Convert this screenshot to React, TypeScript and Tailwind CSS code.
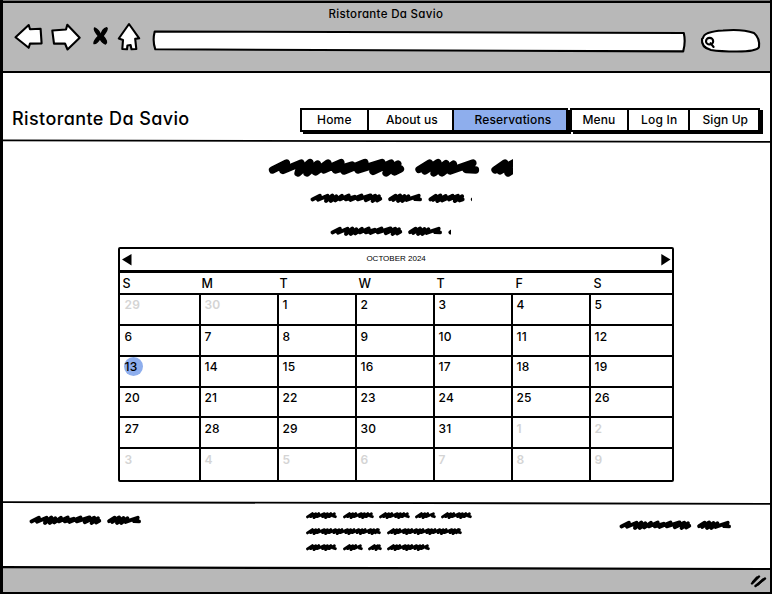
import React from "react";

const WORD_A =
  "M12.5 25 L26.5 18 L23 25.5 L41 18 L38 28 L50 17.5 L47 28 L57.5 19 L55.5 27 L68 18 L64 25 L81 17.5 L75.5 25 L92 20 L84 26 L105 17.5 L98 25 L122 17.5 L113 26.5 L131 18 L126 28 L138 19 L134.5 27 L140.5 24";
const WORD_B =
  "M159 24.5 L169.5 18 L165 26 L178 17.5 L174 28 L186 18.5 L182 28 L193.5 19 L190 26 L213 18 L206 24.5 L215.5 25";
const WORD_C =
  "M235 25 L245 18 L240 26 L254 17.5 L248 28 L264 18.5 L257 27 L277 18 L270 25 L287 18 L281 28 L295 19 L290 27 L296 25";
const WORD_D = "M315 25 L325 18 L319 27 L332 18";

/* Scribbled headline; width cuts the line off, scale sets the pen size. */
function Scribble({ width, scale, className }: { width: number; scale: number; className: string }) {
  const h = Math.round(24 * scale);
  return (
    <svg
      className={`block ${className}`}
      width={width}
      height={h}
      viewBox={`6 11 ${width / scale} ${h / scale}`}
      fill="none"
      stroke="black"
      strokeWidth={7.3}
      strokeLinecap="round"
      strokeLinejoin="round"
    >
      <path d={WORD_A} />
      <path d={WORD_B} />
      <path d={WORD_C} />
      <path d={WORD_D} />
    </svg>
  );
}

const SMALL_LINES: number[][][] = [
  [[0, 31], [37, 68], [73, 104], [109, 130], [135, 166]],
  [[0, 75], [81, 156]],
  [[0, 31], [37, 57], [62, 76], [81, 124]],
];

const STEPS = [3.4, 3, 5.6, 3, 3.4, 4.8];

function wave(a: number, b: number) {
  let d = `M${a + 1.5} 5.9`;
  let i = 0;
  for (let x = a + 4; x < b - 5; x += STEPS[i++ % 6]) {
    d += ` L${x + 2.4} 2.6 L${x + 0.6} ${i % 3 === 1 ? 6.6 : 5.7}`;
  }
  return d + ` L${b - 2.6} 2.8 L${b - 3.6} 5.2 L${b - 1.6} 5.7`;
}

function SmallLine({ words }: { words: number[][] }) {
  return (
    <svg className="block" width="168" height="8" viewBox="0 0 168 8" fill="none" stroke="black" strokeWidth="2.8" strokeLinecap="round" strokeLinejoin="round">
      {words.map(([a, b]) => (
        <path key={a} d={wave(a, b)} />
      ))}
    </svg>
  );
}

function Toolbar() {
  return (
    <header className="h-[68px] shrink-0 bg-[#b8b8b8]">
      <div className="h-[22px] pl-[325.5px] pt-[3px] text-[11.5px] font-[450] leading-[16px] tracking-[0.32px]">Ristorante Da Savio</div>
      <svg className="block" width="767" height="36" viewBox="3 25 767 36" overflow="visible" fill="white" stroke="black" strokeWidth="2.1" strokeLinejoin="round">
        <path d="M15.5 37.3 L28.7 25 L30 29.2 L40.6 28.8 L41.6 43.4 L30 43.6 L28.7 47.8 Z" />
        <path d="M52.3 30.5 L66 29.5 L67.3 24.8 L79.7 37.8 L67.5 49.5 L65 43.5 L54 43.6 Z" />
        <path d="M94.5 28 Q99 30 101 35.5 Q102 29 106.8 27.8 Q108.5 29 103 36 Q108.5 42 105.5 44 Q102 43 100 38.5 Q97 44 94 43.6 Q93.5 41 98.5 36 Q93.5 30 94.5 28 Z" fill="black" strokeWidth="1.4" />
        <path d="M129 24 L139.2 38.3 L135.2 38.9 L136.3 49 L131.5 49.3 L130.6 45 L127.4 45.5 L127 49.3 L122.3 49 L123 40 L118.8 38.5 Z" />
        <path d="M154.7 31.5 L683.8 33 Q685.8 42 683.2 51.4 L155.3 49.3 Q152.3 41 154.7 31.5 Z" />
        <path d="M703 38 Q704 31.5 723 30.5 Q742 28.7 754 33 Q760 38 759 47 Q757 51.5 737 51.5 Q720 51.5 711 50 Q701 47.5 702 39 Z" />
        <g fill="none">
          <ellipse cx="709.6" cy="41.2" rx="3.6" ry="3.3" />
          <path d="M710.5 43.2 L713.6 47" strokeLinecap="round" />
        </g>
      </svg>
    </header>
  );
}

function Slope({ left, right, weight, top, bottom, className }: { left: number; right: number; weight: number; top: string; bottom: string; className: string }) {
  return (
    <svg className={`block w-full shrink-0 ${className}`} viewBox="0 0 767 4" preserveAspectRatio="none">
      <rect width="767" height="4" fill={top} />
      <path d={`M0 ${left} L767 ${right} V4 H0 Z`} fill={bottom} />
      <path d={`M0 ${left} L767 ${right}`} stroke="black" strokeWidth={weight} />
    </svg>
  );
}

const TABS = [
  { label: "Home", box: "w-[69px] pl-[15px] border-l-2 bg-white", text: "tracking-[0.2px]" },
  { label: "About us", box: "w-[85px] pl-[17px] bg-white", text: "tracking-[0.05px]" },
  { label: "Reservations", box: "w-[114px] pl-[20.5px] bg-[#8eaeed]", text: "tracking-[0.15px]" },
];
const MORE_TABS = [
  { label: "Menu", box: "w-[59px] pl-[10.5px] border-l-2 bg-white", text: "tracking-[0.1px]" },
  { label: "Log In", box: "w-[61px] pl-[12px] bg-white", text: "tracking-[0.2px]" },
  { label: "Sign Up", box: "w-[70px] pl-[12.5px] bg-white", text: "tracking-[0.1px]" },
];

function TabGroup({ tabs }: { tabs: typeof TABS }) {
  return (
    <div className="flex h-[24px] shadow-[3px_2px_0_0_black]">
      {tabs.map((t) => (
        <a key={t.label} className={`block shrink-0 whitespace-nowrap border-y-2 border-r-2 border-black text-[12px] font-[450] leading-[20px] ${t.box}`}>
          <span className={t.text}>{t.label}</span>
        </a>
      ))}
    </div>
  );
}

const DAYS = ["S", "M", "T", "W", "T", "F", "S"];
const CELLS = [29, 30, ...Array.from({ length: 31 }, (_, i) => i + 1), 1, 2, 3, 4, 5, 6, 7, 8, 9];

function Calendar() {
  return (
    <section className="ml-[114.6px] w-[556px] rounded-[2px] border-2 border-black">
      <div className="flex h-[21px] items-center justify-between pl-[2px] pr-[1px]">
        <svg width="10" height="12" viewBox="0 0 10 12">
          <path d="M0 5.5 L9.5 0 V11.5 Z" />
        </svg>
        <span className="-mt-[2px] font-['Liberation_Sans',sans-serif] text-[8px] leading-[10px]">OCTOBER 2024</span>
        <svg width="10" height="12" viewBox="0 0 10 12">
          <path d="M9.5 5.5 L0.3 0 V11.5 Z" />
        </svg>
      </div>
      <div className="h-[3px] bg-black" />
      <div className="grid h-[20px] grid-cols-[79px_78px_79px_78px_79px_78px_80px] pl-[3px] text-[12.5px] font-[450] leading-[21px]">
        {DAYS.map((d, i) => (
          <span key={i}>{d}</span>
        ))}
      </div>
      <div className="grid grid-cols-[81px_78px_78px_78px_78px_78px_81px] grid-rows-[31px_31px_31px_30px_31px_31px] border-t-2 border-black text-[12px] font-medium leading-[20px] tracking-[0.1px]">
        {CELLS.map((n, i) => {
          const muted = i < 2 || i > 32;
          const lowered = (i >= 7 && i < 14) || i >= 28;
          return (
            <div
              key={i}
              className={`border-black ${i % 7 === 0 ? "pl-[5px]" : "pl-[4px]"} ${i % 7 < 6 ? "border-r-2" : ""} ${i < 35 ? "border-b-2" : ""} ${muted ? "font-semibold text-[#d4d4d4]" : "text-black"} ${lowered ? "pt-[1px]" : ""}`}
            >
              {i === 14 ? (
                <span className="-ml-px flex h-[19px] w-[19px] items-center justify-start rounded-full bg-[#8eaeed] pl-px">{n}</span>
              ) : (
                n
              )}
            </div>
          );
        })}
      </div>
    </section>
  );
}

export default function App() {
  return (
    <div className="h-[596px] w-[775px] overflow-hidden bg-white font-['Inter',sans-serif] text-black [font-feature-settings:'cv11']">
      <div className="flex h-[594px] w-[772px] flex-col border-b-2 border-l-[3px] border-r-2 border-black bg-white">
        <div className="h-px shrink-0 bg-[#777]" />
        <div className="h-[2px] shrink-0 bg-black" />
        <Toolbar />
        <div className="h-[2px] shrink-0 bg-black" />
        <div className="flex h-[66px] shrink-0">
          <h1 className="w-[297px] pl-[9px] pt-[34px] text-[18px] font-[450] leading-[24px] tracking-[0.4px]">Ristorante Da Savio</h1>
          <nav className="flex gap-[2px] pt-[35px]">
            <TabGroup tabs={TABS} />
            <TabGroup tabs={MORE_TABS} />
          </nav>
        </div>
        <Slope className="h-[4px]" left={1.3} right={2.8} weight={1.8} top="white" bottom="white" />
        <main className="h-[358px] shrink-0 pt-[13px]">
          <Scribble className="ml-[263px]" width={247} scale={1} />
          <Scribble className="ml-[306px] mt-[12px]" width={163} scale={0.53} />
          <Scribble className="ml-[326px] mt-[20px]" width={122} scale={0.53} />
          <div className="h-[9px]" />
          <Calendar />
        </main>
        <Slope className="h-[4px]" left={1.2} right={2.8} weight={1.8} top="white" bottom="white" />
        <footer className="flex h-[61px] shrink-0 items-start">
          <Scribble className="ml-[25px] mt-[9px]" width={114} scale={0.53} />
          <div className="ml-[164px] mt-[6px] flex w-[168px] flex-col gap-[8px]">
            {SMALL_LINES.map((words, i) => (
              <SmallLine key={i} words={words} />
            ))}
          </div>
          <Scribble className="ml-[144px] mt-[14px]" width={114} scale={0.53} />
        </footer>
        <Slope className="h-[4px]" left={1.2} right={3} weight={2.2} top="white" bottom="#b8b8b8" />
        <div className="flex min-h-0 flex-1 items-center justify-end bg-[#b8b8b8] pr-[3px]">
          <svg width="18" height="16" viewBox="0 0 18 16" fill="none" stroke="black" strokeWidth="2.4" strokeLinecap="round">
            <path d="M3 10.5 L10 3.5 M6.5 13 L16 5.5" />
            <path d="M4 9 L8 4.5 M9 11.5 L14 6.5" />
          </svg>
        </div>
      </div>
    </div>
  );
}
